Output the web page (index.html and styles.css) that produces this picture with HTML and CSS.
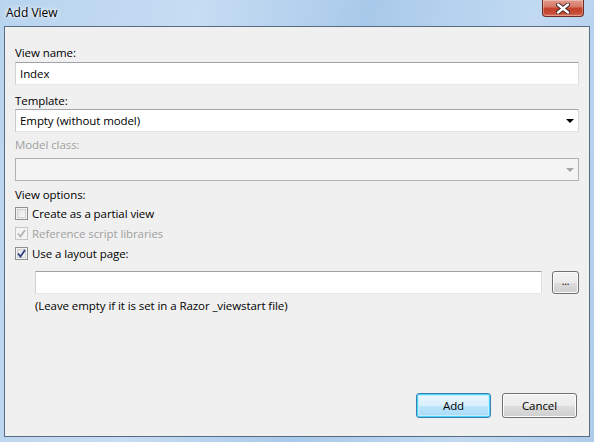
FILE: index.html
```html
<!DOCTYPE html>
<html>
<head>
<meta charset="utf-8">
<link rel="stylesheet" href="styles.css">
</head>
<body>
<div class="window">
  <div class="titlebar">
    <span class="title">Add View</span>
    <span class="close"><svg width="14" height="11" viewBox="0 0 14 11"><path d="M2 1.5 L12 9.5 M12 1.5 L2 9.5" stroke="#3a2020" stroke-width="4.2" stroke-linecap="round"/><path d="M2 1.5 L12 9.5 M12 1.5 L2 9.5" stroke="#ffffff" stroke-width="2.4" stroke-linecap="round"/></svg></span>
  </div>
  <div class="client">
    <div class="label">View name:</div>
    <div class="textbox name-box">Index</div>

    <div class="label tpl-label">Template:</div>
    <div class="combo tpl-combo"><span>Empty (without model)</span><span class="arrow"></span></div>

    <div class="label model-label disabled">Model class:</div>
    <div class="combo off model-combo"><span></span><span class="arrow grey"></span></div>

    <div class="label opts-label">View options:</div>
    <div class="check-row"><span class="cb"></span><span>Create as a partial view</span></div>
    <div class="check-row disabled"><span class="cb cb-off"><svg width="9" height="9" viewBox="0 0 9 9"><path d="M1 4.5 L3.5 7.5 L8 1" fill="none" stroke="#b5b5b5" stroke-width="1.8"/></svg></span><span>Reference script libraries</span></div>
    <div class="check-row"><span class="cb"><svg width="9" height="9" viewBox="0 0 9 9"><path d="M1 4.5 L3.5 7.5 L8 1" fill="none" stroke="#2b3d84" stroke-width="1.8"/></svg></span><span>Use a layout page:</span></div>

    <div class="layout-row">
      <div class="textbox layout-box"></div>
      <div class="btn small">...</div>
    </div>
    <div class="hint">(Leave empty if it is set in a Razor _viewstart file)</div>

    <div class="spacer"></div>
    <div class="buttons">
      <div class="btn default">Add</div>
      <div class="btn">Cancel</div>
    </div>
  </div>
</div>
</body>
</html>
```

FILE: styles.css
```css
* { box-sizing: border-box; }
html, body { margin: 0; padding: 0; }
body {
  width: 594px;
  height: 442px;
  overflow: hidden;
  font-family: "Open Sans", "Noto Sans", sans-serif;
  font-size: 11.5px;
  letter-spacing: -0.08px;
  color: #000;
}
.window {
  width: 594px;
  height: 442px;
  display: flex;
  flex-direction: column;
  background: linear-gradient(100deg, #b9d4ee 0%, #c6ddf3 30%, #a9c9ea 55%, #c1daf2 80%, #aecbe9 100%);
  padding: 0 4px 5px 4px;
}
.titlebar {
  height: 26px;
  display: flex;
  justify-content: space-between;
  align-items: flex-start;
}
.title {
  margin-left: 2px;
  margin-top: 4px;
  font-size: 12px;
  letter-spacing: 0;
  color: #000;
  text-shadow: 0 0 6px #ffffff, 0 0 3px #ffffff;
}
.close {
  width: 42px;
  height: 17px;
  margin-right: 6px;
  border: 1px solid #6d2a22;
  border-top: none;
  border-radius: 0 0 4px 4px;
  background: linear-gradient(#e39a8c 0%, #d67a68 40%, #c23e28 55%, #c9503a 85%, #dc7a5f 100%);
  box-shadow: inset 0 0 0 1px rgba(255,255,255,0.3);
  display: flex;
  align-items: center;
  justify-content: center;
}
.client {
  flex: 1;
  background: #f0f0f0;
  border: 1px solid #586b80;
  padding: 18px 10px 17px 10px;
  display: flex;
  flex-direction: column;
}
.label { height: 16px; line-height: 16px; }
.disabled { color: #a0a0a0; }
.name-box { margin-top: 1px; }
.tpl-label { margin-top: 8px; }
.tpl-combo { margin-top: 0; }
.model-label { margin-top: 5px; }
.model-combo { margin-top: 5px; }
.opts-label { margin-top: 6px; }
.textbox {
  height: 23px;
  background: #fff;
  border: 1px solid #abadb3;
  border-top-color: #9ea1a8;
  border-left-color: #cfd1d6;
  border-right-color: #dcdee2;
  border-bottom-color: #e3e9ef;
  padding: 0 4px;
  line-height: 21px;
}
.combo {
  height: 23px;
  background: #fff;
  border: 1px solid #acacac;
  border-color: #a6a6a6 #d9d9d9 #e3e3e3 #c8c8c8;
  display: flex;
  justify-content: space-between;
  align-items: center;
  padding: 0 4px;
}
.combo.off {
  background: #f4f4f4;
  border-color: #adb2b5;
}
.arrow {
  width: 0; height: 0;
  border-left: 4px solid transparent;
  border-right: 4px solid transparent;
  border-top: 4px solid #000;
}
.arrow.grey { border-top-color: #a5a5a5; }
.check-row {
  display: flex;
  align-items: center;
  height: 20px;
  gap: 4px;
}
.cb {
  width: 13px;
  height: 13px;
  border: 1px solid #8e8f8f;
  background: linear-gradient(135deg, #dcdcdc, #ffffff);
  box-shadow: inset 0 0 0 1px #f4f4f4, inset 0 0 0 2px #cfd0d2;
  display: flex;
  align-items: center;
  justify-content: center;
  flex: none;
}
.cb-off {
  border-color: #c6c6c6;
  background: #f4f4f4;
  box-shadow: none;
}
.layout-row {
  margin-top: 8px;
  margin-left: 20px;
  display: flex;
  gap: 10px;
}
.layout-box { flex: 1; }
.btn {
  height: 25px;
  width: 75px;
  border: 1px solid #707070;
  border-radius: 3px;
  background: linear-gradient(#f2f2f2 0%, #ebebeb 50%, #dddddd 51%, #cfcfcf 100%);
  box-shadow: inset 0 0 0 1px #fcfcfc;
  display: flex;
  align-items: center;
  justify-content: center;
  line-height: 1;
}
.btn.small {
  width: 27px;
  height: 23px;
  font-size: 10px;
  padding-bottom: 3px;
}
.hint { margin-left: 20px; margin-top: 4px; height: 16px; line-height: 16px; }
.spacer { flex: 1; }
.buttons {
  display: flex;
  justify-content: flex-end;
  gap: 11px;
  margin-right: 2px;
  margin-bottom: 1px;
}
.btn.default {
  border-color: #3c7fb1;
  background: linear-gradient(#eaf6fd 0%, #d9f0fc 50%, #bee6fd 51%, #a7d9f5 100%);
  box-shadow: inset 0 0 0 1px #48d4f8, inset 0 0 0 2px #c4edfd;
}
```
